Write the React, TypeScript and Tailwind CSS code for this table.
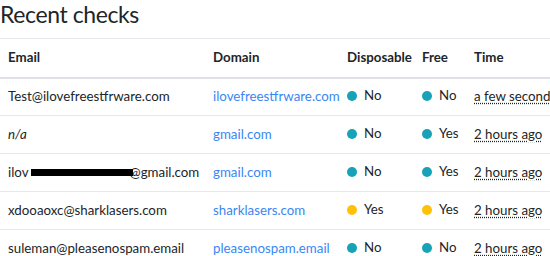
const rows = [
  { email: 'Test@ilovefreestfrware.com', domain: 'ilovefreestfrware.com', disposable: false, free: false, time: 'a few seconds ago' },
  { email: 'n/a', domain: 'gmail.com', disposable: false, free: true, time: '2 hours ago', missing: true },
  { email: 'redacted', domain: 'gmail.com', disposable: false, free: true, time: '2 hours ago' },
  { email: 'xdooaoxc@sharklasers.com', domain: 'sharklasers.com', disposable: true, free: true, time: '2 hours ago', warn: true },
  { email: 'suleman@pleasenospam.email', domain: 'pleasenospam.email', disposable: false, free: false, time: '2 hours ago' },
];

const Flag = ({ on, warn }: { on: boolean; warn?: boolean }) => (
  <span className="inline-flex items-center gap-[7px]">
    <span className={`inline-block w-[10px] h-[10px] rounded-full ${warn ? 'bg-[#ffc107]' : 'bg-[#17a2b8]'}`} />
    <span>{on ? 'Yes' : 'No'}</span>
  </span>
);

export default function App() {
  return (
    <div className="w-[550px] h-[256px] overflow-hidden bg-white text-[#212529] font-['Lato',sans-serif]">
      <h1 className="text-[23px] leading-[32px] font-normal tracking-[-0.4px] -mt-[2px] mb-[8px]">Recent checks</h1>
      <table className="table-fixed border-collapse text-[13.3px] w-[620px]">
        <colgroup>
          <col className="w-[205px]" />
          <col className="w-[134px]" />
          <col className="w-[75px]" />
          <col className="w-[52px]" />
          <col className="w-[154px]" />
        </colgroup>
        <thead>
          <tr className="border-t border-[#e3e6ea] border-b-2 border-b-[#dee2e6]">
            <th className="text-left font-bold h-[39px] pl-2 whitespace-nowrap">Email</th>
            <th className="text-left font-bold pl-2 whitespace-nowrap">Domain</th>
            <th className="text-left font-bold pl-2 whitespace-nowrap">Disposable</th>
            <th className="text-left font-bold pl-2 whitespace-nowrap">Free</th>
            <th className="text-left font-bold pl-2 whitespace-nowrap">Time</th>
          </tr>
        </thead>
        <tbody>
          {rows.map((r, i) => (
            <tr key={i} className="border-b border-[#e6e8eb]">
              <td className="h-[38px] pl-2 whitespace-nowrap">
                {r.email === 'redacted' ? (
                  <span className="inline-flex items-center">
                    ilov
                    <span className="inline-block w-[102px] h-[7px] bg-black ml-[2px] -mr-[3px] relative z-10" />
                    @gmail.com
                  </span>
                ) : r.missing ? (
                  <em>{r.email}</em>
                ) : (
                  r.email
                )}
              </td>
              <td className="pl-2 whitespace-nowrap">
                <a href="#" className="text-[#3a86f5]">{r.domain}</a>
              </td>
              <td className="pl-2 whitespace-nowrap"><Flag on={r.disposable} warn={r.warn} /></td>
              <td className="pl-2 whitespace-nowrap"><Flag on={r.free} warn={r.warn} /></td>
              <td className="pl-2 whitespace-nowrap">
                <abbr className="underline decoration-dotted underline-offset-2">{r.time}</abbr>
              </td>
            </tr>
          ))}
        </tbody>
      </table>
    </div>
  );
}
